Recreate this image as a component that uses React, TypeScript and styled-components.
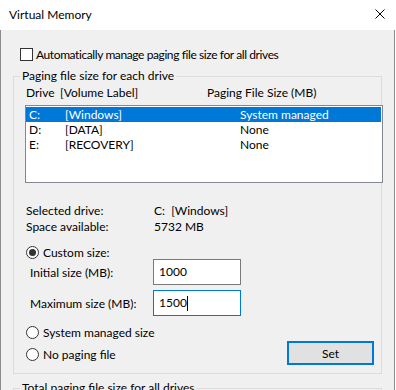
import React from 'react'
import styled, { createGlobalStyle } from 'styled-components'

const Global = createGlobalStyle`
  html, body {
    margin: 0;
    padding: 0;
    background: #ffffff;
  }
  body {
    font-family: Lato, "Noto Sans", "Liberation Sans", sans-serif;
    font-size: 12px;
    color: #000;
  }
`

const drives = [
  { letter: 'C:', label: '[Windows]', size: 'System managed', selected: true },
  { letter: 'D:', label: '[DATA]', size: 'None', selected: false },
  { letter: 'E:', label: '[RECOVERY]', size: 'None', selected: false },
]

const App = () => {
  return (
    <>
      <Global />
      <Window>
        <TitleBar>
          <Title>Virtual Memory</Title>
          <CloseIcon viewBox="0 0 10 10" width="10" height="10">
            <path d="M0.5 0.5 L9.5 9.5 M9.5 0.5 L0.5 9.5" stroke="#000" strokeWidth="1" />
          </CloseIcon>
        </TitleBar>
        <Body>
          <CheckRow>
            <CheckBox />
            <CheckLabel>Automatically manage paging file size for all drives</CheckLabel>
          </CheckRow>

          <Group>
            <Legend>Paging file size for each drive</Legend>
            <HeaderRow>
              <HeadCol $w={34}>Drive</HeadCol>
              <HeadCol $w={147}>[Volume Label]</HeadCol>
              <HeadCol>Paging File Size (MB)</HeadCol>
            </HeaderRow>
            <ListBox>
              {drives.map((d) => (
                <ListRow key={d.letter} $selected={d.selected}>
                  <LetterCol>{d.letter}</LetterCol>
                  <LabelCol>{d.label}</LabelCol>
                  <span>{d.size}</span>
                </ListRow>
              ))}
            </ListBox>

            <InfoBlock>
              <InfoRow>
                <InfoLabel>Selected drive:</InfoLabel>
                <span>C:&nbsp;&nbsp;[Windows]</span>
              </InfoRow>
              <InfoRow>
                <InfoLabel>Space available:</InfoLabel>
                <span>5732 MB</span>
              </InfoRow>
            </InfoBlock>

            <RadioRow $top={11}>
              <Radio $checked />
              <span>Custom size:</span>
            </RadioRow>
            <FieldRow $top={0}>
              <FieldLabel>Initial size (MB):</FieldLabel>
              <Input>1000</Input>
            </FieldRow>
            <FieldRow $top={5}>
              <FieldLabel>Maximum size (MB):</FieldLabel>
              <Input $focused>
                1500<Caret />
              </Input>
            </FieldRow>
            <RadioRow $top={10}>
              <Radio />
              <span>System managed size</span>
            </RadioRow>
            <BottomRow>
              <RadioRow $top={7}>
                <Radio />
                <span>No paging file</span>
              </RadioRow>
              <SetButton>Set</SetButton>
            </BottomRow>
          </Group>

          <Group $top={6}>
            <Legend>Total paging file size for all drives</Legend>
            <Spacer />
          </Group>
        </Body>
      </Window>
    </>
  )
}

export default App

const Window = styled.div`
  width: 395px;
  height: 390px;
  overflow: hidden;
  display: flex;
  flex-direction: column;
`

const TitleBar = styled.div`
  height: 30px;
  flex-shrink: 0;
  background: #ffffff;
  display: flex;
  align-items: center;
  justify-content: space-between;
  padding: 0 10px 2px 9px;
  box-sizing: border-box;
`

const Title = styled.div`
  font-size: 12px;
`

const CloseIcon = styled.svg`
  display: block;
`

const Body = styled.div`
  flex: 1;
  background: #f0f0f0;
  border-left: 1px solid #8c8c8c;
  border-right: 1px solid #8c8c8c;
  display: flex;
  flex-direction: column;
`

const CheckRow = styled.div`
  display: flex;
  align-items: center;
  gap: 3px;
  height: 13px;
  margin: 18px 0 0 19px;
  line-height: 13px;
`

const CheckLabel = styled.span`
  letter-spacing: -0.4px;
`

const CheckBox = styled.div`
  width: 13px;
  height: 13px;
  box-sizing: border-box;
  border: 1px solid #333333;
  background: #ffffff;
`

const Group = styled.fieldset<{ $top?: number }>`
  margin: ${(p) => (p.$top ?? 7)}px 12px 0 12px;
  padding: 0 0 8px 12px;
  border: 1px solid #dcdcdc;
  min-width: 0;
`

const Legend = styled.legend`
  margin-left: -6px;
  padding: 0 2px;
  line-height: 16px;
`

const HeaderRow = styled.div`
  display: flex;
  line-height: 16px;
  margin-top: 1px;
`

const HeadCol = styled.span<{ $w?: number }>`
  width: ${(p) => (p.$w ? `${p.$w}px` : 'auto')};
`

const ListBox = styled.div`
  width: 358px;
  height: 78px;
  box-sizing: border-box;
  margin: 4px 0 0 -1px;
  padding-top: 1px;
  border: 1px solid #828790;
  background: #ffffff;
`

const ListRow = styled.div<{ $selected: boolean }>`
  display: flex;
  height: 15px;
  line-height: 15px;
  padding-left: 3px;
  margin-right: 1px;
  background: ${(p) => (p.$selected ? '#0078d7' : 'transparent')};
  color: ${(p) => (p.$selected ? '#ffffff' : '#000000')};
`

const LetterCol = styled.span`
  width: 36px;
`

const LabelCol = styled.span`
  width: 175px;
`

const InfoBlock = styled.div`
  margin-top: 20px;
`

const InfoRow = styled.div`
  display: flex;
  line-height: 16px;
`

const InfoLabel = styled.span`
  width: 128px;
`

const RadioRow = styled.div<{ $top: number }>`
  display: flex;
  align-items: center;
  gap: 4px;
  height: 13px;
  line-height: 13px;
  margin-top: ${(p) => p.$top}px;
`

const Radio = styled.div<{ $checked?: boolean }>`
  width: 13px;
  height: 13px;
  box-sizing: border-box;
  border-radius: 50%;
  border: 1px solid #333333;
  background: #ffffff;
  display: flex;
  align-items: center;
  justify-content: center;
  &::after {
    content: '';
    display: ${(p) => (p.$checked ? 'block' : 'none')};
    width: 7px;
    height: 7px;
    border-radius: 50%;
    background: #333333;
  }
`

const FieldRow = styled.div<{ $top: number }>`
  display: flex;
  align-items: center;
  margin-top: ${(p) => p.$top}px;
  padding-left: 4px;
`

const FieldLabel = styled.span`
  width: 123px;
`

const Input = styled.div<{ $focused?: boolean }>`
  width: 88px;
  height: 26px;
  box-sizing: border-box;
  border: 1px solid ${(p) => (p.$focused ? '#0078d7' : '#7a7a7a')};
  background: #ffffff;
  padding-left: 5px;
  display: flex;
  align-items: center;
  line-height: 16px;
`

const Caret = styled.span`
  display: inline-block;
  width: 1px;
  height: 15px;
  background: #000;
`

const BottomRow = styled.div`
  display: flex;
  justify-content: space-between;
  align-items: flex-start;
  margin-top: 2px;
  padding-right: 7px;
`

const SetButton = styled.button`
  width: 87px;
  height: 24px;
  box-sizing: border-box;
  border: 2px solid #0078d7;
  background: #e1e1e1;
  font-family: inherit;
  font-size: 12px;
  color: #000;
  padding: 0;
`

const Spacer = styled.div`
  height: 40px;
`
